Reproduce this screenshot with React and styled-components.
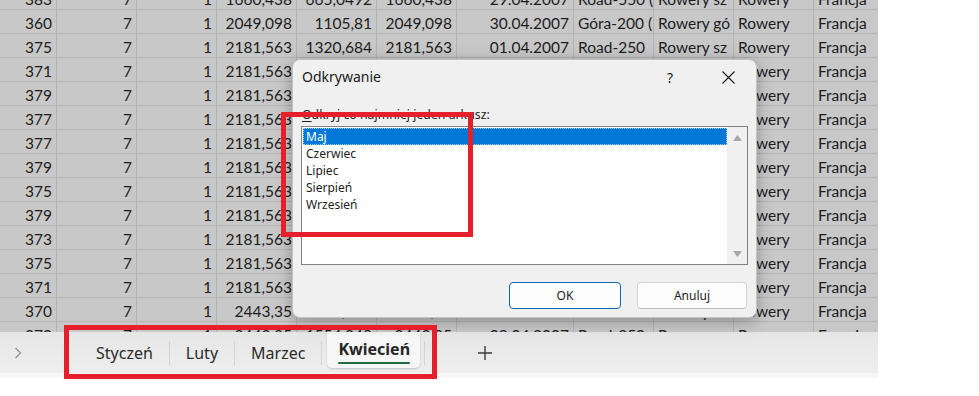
import React from "react";
import styled, { createGlobalStyle } from "styled-components";

const Global = createGlobalStyle`
  html, body { margin: 0; padding: 0; background: #ffffff; overflow: hidden; }
  * { box-sizing: border-box; }
`;

const Screen = styled.div`
  position: relative;
  width: 979px;
  height: 396px;
  background: #ffffff;
  overflow: hidden;
`;

const Workbook = styled.div`
  width: 878px;
  display: flex;
  flex-direction: column;
`;

const Sheet = styled.div`
  height: 332px;
  overflow: hidden;
  background: #c8c8c8;
`;

const Grid = styled.div`
  margin-top: -14px;
  display: flex;
  flex-direction: column;
`;

const Row = styled.div`
  display: grid;
  grid-template-columns: 57px 80px 80px 80px 80px 80px 117px 80px 80px 80px 64px;
  height: 24px;
  flex-shrink: 0;
`;

const Cell = styled.div`
  display: flex;
  align-items: flex-end;
  justify-content: ${(p) => (p.$align === "left" ? "flex-start" : "flex-end")};
  padding: 0 ${(p) => (p.$align === "left" ? "0 0 4px" : "4px 0 0")};
  border-bottom: 1px solid #b3b3b3;
  border-right: ${(p) => (p.$last ? "none" : "1px solid #b3b3b3")};
  overflow: hidden;
  white-space: nowrap;
  font-family: Lato, "Liberation Sans", sans-serif;
  font-size: 15.5px;
  line-height: 20px;
  color: #1c1c1c;
`;

const TabBar = styled.div`
  height: 41px;
  display: flex;
  align-items: center;
  background: linear-gradient(#e6e6e6, #eeeeee);
  font-family: "Noto Sans", "Open Sans", sans-serif;
`;

const TabBarEdge = styled.div`
  height: 5px;
  background: #f6f6f6;
`;

const ScrollArrow = styled.div`
  width: 80px;
  height: 41px;
  display: flex;
  align-items: center;
  padding-left: 14px;
`;

const Tab = styled.div`
  height: ${(p) => (p.$active ? "36px" : "41px")};
  align-self: flex-start;
  display: flex;
  align-items: center;
  position: relative;
  padding: ${(p) => (p.$active ? "0 10px 2px 11px" : "0 16px")};
  margin: ${(p) => (p.$active ? "0 4px 0 5px" : "0")};
  font-size: 16px;
  font-weight: ${(p) => (p.$active ? 700 : 400)};
  color: ${(p) => (p.$active ? "#262626" : "#2b2b2b")};
  background: ${(p) => (p.$active ? "#f6f6f6" : "transparent")};
  border-radius: 0 0 5px 5px;
  box-shadow: ${(p) => (p.$active ? "0 1px 2px rgba(0,0,0,0.18)" : "none")};
`;

const TabUnderline = styled.span`
  position: absolute;
  left: 11px;
  right: 10px;
  bottom: 4px;
  height: 2px;
  border-radius: 1px;
  background: #1e6b43;
`;

const TabSep = styled.div`
  width: 1px;
  height: 24px;
  background: #d2d2d2;
`;

const AddSheet = styled.div`
  margin-left: 50px;
  width: 20px;
  height: 20px;
  display: flex;
  align-items: center;
  justify-content: center;
`;

const Dialog = styled.div`
  position: absolute;
  left: 292px;
  top: 59px;
  width: 465px;
  height: 259px;
  background: #f0f0f0;
  border: 1px solid #c4c4c4;
  border-radius: 8px;
  box-shadow: 0 3px 16px rgba(0, 0, 0, 0.3);
  display: flex;
  flex-direction: column;
  font-family: "Noto Sans", "Open Sans", sans-serif;
  color: #1b1b1b;
`;

const TitleBar = styled.div`
  height: 33px;
  display: flex;
  align-items: center;
  justify-content: space-between;
  padding-left: 9px;
`;

const Title = styled.div`
  font-size: 14px;
  line-height: 20px;
  padding-top: 1px;
`;

const TitleButtons = styled.div`
  display: flex;
  gap: 12px;
  margin-right: 5px;
  height: 33px;
`;

const TitleButton = styled.div`
  width: 46px;
  height: 33px;
  display: flex;
  align-items: center;
  justify-content: center;
  font-size: 14px;
  padding-top: 2px;
  color: #1b1b1b;
`;

const Body = styled.div`
  padding: 0 8px 0 8px;
  display: flex;
  flex-direction: column;
`;

const Label = styled.div`
  margin-top: 14px;
  padding-left: 1px;
  font-size: 12.3px;
  line-height: 16px;
  u { text-underline-offset: 2px; }
`;

const ListBox = styled.div`
  margin-top: 3px;
  width: 447px;
  height: 139px;
  background: #ffffff;
  border: 1px solid #828282;
  display: flex;
`;

const Items = styled.div`
  flex: 1;
  padding: 1px 0 0 1px;
  display: flex;
  flex-direction: column;
`;

const Item = styled.div`
  height: 17px;
  padding-left: 3px;
  font-size: 12px;
  line-height: 17px;
  color: ${(p) => (p.$selected ? "#ffffff" : "#1b1b1b")};
  background: ${(p) => (p.$selected ? "#0078d7" : "transparent")};
  outline: ${(p) => (p.$selected ? "1px dotted #a8cdf0" : "none")};
  outline-offset: -1px;
`;

const ScrollBar = styled.div`
  width: 20px;
  background: #f0f0f0;
  display: flex;
  flex-direction: column;
  justify-content: space-between;
  align-items: center;
  padding: 8px 0 7px;
`;

const Buttons = styled.div`
  margin-top: 17px;
  display: flex;
  justify-content: flex-end;
  gap: 16px;
  padding-right: 1px;
`;

const Button = styled.div`
  width: ${(p) => (p.$primary ? "112px" : "110px")};
  height: 27px;
  display: flex;
  align-items: center;
  justify-content: center;
  font-size: 12px;
  color: #1b1b1b;
  background: #fdfdfd;
  border: 1px solid ${(p) => (p.$primary ? "#0f67b8" : "#d3d3d3")};
  border-bottom-color: ${(p) => (p.$primary ? "#0f67b8" : "#bdbdbd")};
  border-radius: 4px;
`;

const Highlight = styled.div`
  position: absolute;
  left: ${(p) => p.$x}px;
  top: ${(p) => p.$y}px;
  width: ${(p) => p.$w}px;
  height: ${(p) => p.$h}px;
  border: 5px solid #e5202c;
  pointer-events: none;
`;

const LEFT = new Set([7, 8, 9, 10]);

const tail = (date) => ["1320,684", "2181,563", date, "Road-250", "Rowery sz", "Rowery", "Francja"];

const rowsData = [
  ["383", "7", "1", "1660,438", "665,0492", "1660,438", "29.04.2007", "Road-550 (", "Rowery sz", "Rowery", "Francja"],
  ["360", "7", "1", "2049,098", "1105,81", "2049,098", "30.04.2007", "Góra-200 (", "Rowery gó", "Rowery", "Francja"],
  ["375", "7", "1", "2181,563", ...tail("01.04.2007")],
  ["371", "7", "1", "2181,563", ...tail("02.04.2007")],
  ["379", "7", "1", "2181,563", ...tail("02.04.2007")],
  ["377", "7", "1", "2181,563", ...tail("03.04.2007")],
  ["377", "7", "1", "2181,563", ...tail("03.04.2007")],
  ["379", "7", "1", "2181,563", ...tail("04.04.2007")],
  ["375", "7", "1", "2181,563", ...tail("05.04.2007")],
  ["379", "7", "1", "2181,563", ...tail("06.04.2007")],
  ["373", "7", "1", "2181,563", ...tail("06.04.2007")],
  ["375", "7", "1", "2181,563", ...tail("07.04.2007")],
  ["371", "7", "1", "2181,563", ...tail("08.04.2007")],
  ["370", "7", "1", "2443,35", "1554,948", "2443,35", "08.04.2007", "Road-250", "Rowery sz", "Rowery", "Francja"],
  ["370", "7", "1", "2443,35", "1554,948", "2443,35", "09.04.2007", "Road-250", "Rowery sz", "Rowery", "Francja"],
];

const sheets = ["Maj", "Czerwiec", "Lipiec", "Sierpień", "Wrzesień"];

export default function App() {
  return (
    <Screen>
      <Global />
      <Workbook>
        <Sheet>
          <Grid>
            {rowsData.map((r, i) => (
              <Row key={i}>
                {r.map((v, j) => (
                  <Cell key={j} $align={LEFT.has(j) ? "left" : "right"} $last={j === r.length - 1}>
                    {v}
                  </Cell>
                ))}
              </Row>
            ))}
          </Grid>
        </Sheet>
        <TabBar>
          <ScrollArrow>
            <svg width="8" height="12" viewBox="0 0 8 12">
              <path d="M1.5 1 L6.5 6 L1.5 11" fill="none" stroke="#8f8f8f" strokeWidth="1.2" />
            </svg>
          </ScrollArrow>
          <Tab>Styczeń</Tab>
          <TabSep />
          <Tab>Luty</Tab>
          <TabSep />
          <Tab>Marzec</Tab>
          <TabSep />
          <Tab $active>
            Kwiecień
            <TabUnderline />
          </Tab>
          <TabSep />
          <AddSheet>
            <svg width="16" height="16" viewBox="0 0 16 16">
              <path d="M8 1 V15 M1 8 H15" stroke="#3a3a3a" strokeWidth="1.4" />
            </svg>
          </AddSheet>
        </TabBar>
        <TabBarEdge />
      </Workbook>

      <Dialog>
        <TitleBar>
          <Title>Odkrywanie</Title>
          <TitleButtons>
            <TitleButton>?</TitleButton>
            <TitleButton>
              <svg width="13" height="13" viewBox="0 0 13 13">
                <path d="M0.5 0.5 L12.5 12.5 M12.5 0.5 L0.5 12.5" stroke="#1b1b1b" strokeWidth="1.1" />
              </svg>
            </TitleButton>
          </TitleButtons>
        </TitleBar>
        <Body>
          <Label>
            <u>O</u>dkryj co najmniej jeden arkusz:
          </Label>
          <ListBox>
            <Items>
              {sheets.map((s, i) => (
                <Item key={s} $selected={i === 0}>
                  {s}
                </Item>
              ))}
            </Items>
            <ScrollBar>
              <svg width="9" height="6" viewBox="0 0 9 6">
                <path d="M4.5 0 L9 6 L0 6 Z" fill="#a6a6a6" />
              </svg>
              <svg width="9" height="6" viewBox="0 0 9 6">
                <path d="M0 0 L9 0 L4.5 6 Z" fill="#a6a6a6" />
              </svg>
            </ScrollBar>
          </ListBox>
          <Buttons>
            <Button $primary>OK</Button>
            <Button>Anuluj</Button>
          </Buttons>
        </Body>
      </Dialog>

      <Highlight $x={281} $y={112} $w={192} $h={125} />
      <Highlight $x={64} $y={325} $w={373} $h={54} />
    </Screen>
  );
}
